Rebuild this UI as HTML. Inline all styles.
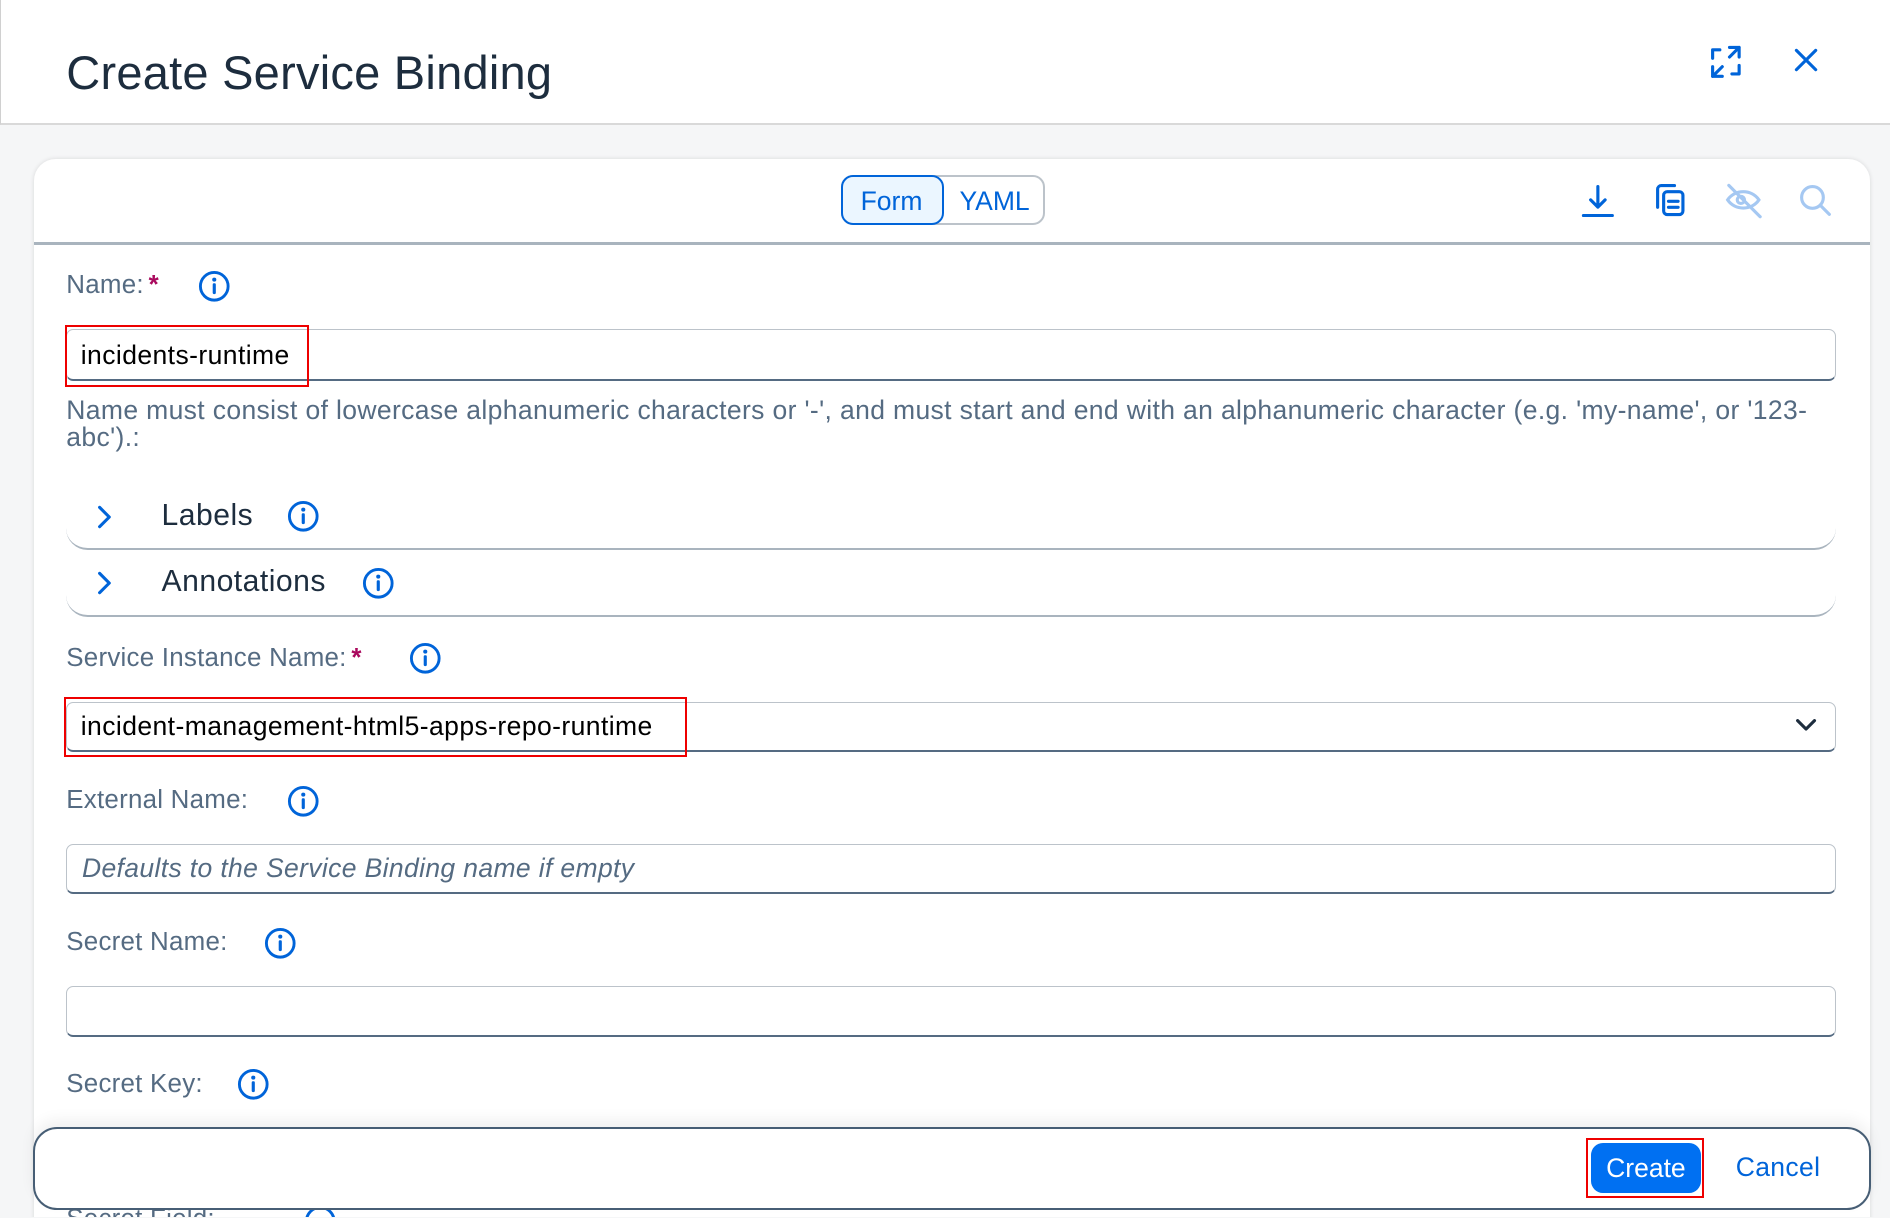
<!DOCTYPE html>
<html><head><meta charset="utf-8">
<style>
html,body{margin:0;padding:0;width:1890px;height:1218px;overflow:hidden;background:#f5f6f7;}
#w{zoom:1.20536;width:1568px;height:1010px;position:relative;overflow:hidden;font-family:"Liberation Sans",sans-serif;background:#f5f6f7;}
.a{position:absolute;}
.hdr{left:0;top:0;width:1568px;height:104px;background:#fff;border-bottom:2px solid #d9d9d9;border-left:1px solid #d0d0d0;box-sizing:border-box;}
.title{left:55px;top:37px;font-size:39px;color:#1d2d3e;letter-spacing:.2px}
.card{left:28px;top:132px;width:1523px;height:900px;background:#fff;border-radius:18px;box-shadow:0 0 4px rgba(0,0,0,.12);}
.tb{left:28px;top:201px;width:1523px;height:2px;background:#a9b4be;}
.lbl{font-size:21.5px;color:#556b82;letter-spacing:.2px}
.ast{color:#aa0a5e;font-weight:bold;margin-left:4px}
.inp{left:55px;width:1468px;height:40px;border:1px solid #bcc3ca;border-bottom:2px solid #556b82;border-radius:6px;box-sizing:border-box;background:#fff;}
.val{font-size:22px;color:#000;letter-spacing:.35px}
.red{border:2px solid #e00;box-sizing:border-box;}
.pan{left:55px;width:1468px;border-bottom:2px solid #a9b4be;border-radius:0 0 18px 18px;}
.pt{font-size:25px;color:#1d2d3e;letter-spacing:.4px}
</style></head><body><div id="w">
<div class="a hdr"></div>
<div class="a title">Create Service Binding</div>
<svg class="a" style="left:1418px;top:37px" width="28" height="28" viewBox="0 0 28 28" fill="none" stroke="#0064d9" stroke-width="2.6" stroke-linecap="round" stroke-linejoin="round"><path d="M3 11V4h6M25 17v7h-6M17 2h8v8M25 2l-8 8M3 18v8h8M3 26l8-8"/></svg>
<svg class="a" style="left:1488px;top:40px" width="20" height="20" viewBox="0 0 20 20" stroke="#0064d9" stroke-width="2.6" stroke-linecap="round"><path d="M2 2l16 16M18 2L2 18"/></svg>
<div class="a card"></div>
<div class="a tb"></div>
<div class="a" style="left:698px;top:145px;width:169px;height:42px;border:2px solid #bcc3ca;border-radius:10px;box-sizing:border-box;"></div>
<div class="a" style="left:698px;top:145px;width:85px;height:42px;border:2px solid #0064d9;border-radius:10px;box-sizing:border-box;background:#ebf6ff;"></div>
<div class="a" style="left:714px;top:154px;font-size:22px;color:#0064d9;">Form</div>
<div class="a" style="left:796px;top:154px;font-size:22px;color:#0064d9;">YAML</div>
<svg class="a" style="left:1312px;top:152px" width="28" height="28" viewBox="0 0 28 28" fill="none" stroke="#0064d9" stroke-width="2.6" stroke-linecap="round" stroke-linejoin="round"><path d="M14 3v17M8 14l6 6 6-6M2 27h24"/></svg>
<svg class="a" style="left:1372px;top:151px" width="28" height="30" viewBox="0 0 28 30" fill="none" stroke="#0064d9" stroke-width="2.6" stroke-linecap="round" stroke-linejoin="round"><path d="M17 3H6a3 3 0 0 0-3 3v15"/><rect x="8" y="8" width="16" height="19" rx="3"/><path d="M12 16h8M12 21h8"/></svg>
<svg class="a" style="left:1430px;top:152px" width="32" height="30" viewBox="0 0 32 30" fill="none" stroke="#a5c8f2" stroke-width="2.6" stroke-linecap="round"><path d="M3 14c6-9 20-9 26 0c-6 9-20 9-26 0z"/><circle cx="14" cy="14" r="3"/><path d="M4 2l26 26"/></svg>
<svg class="a" style="left:1492px;top:152px" width="28" height="28" viewBox="0 0 28 28" fill="none" stroke="#a5c8f2" stroke-width="2.6" stroke-linecap="round"><circle cx="12" cy="12" r="9"/><path d="M19 19l7 7"/></svg>

<div class="a lbl" style="left:55px;top:225px">Name:<span class="ast">*</span></div>
<svg class="a" style="left:164px;top:224px" width="27" height="27" viewBox="0 0 27 27"><circle cx="13.5" cy="13.5" r="11.5" fill="none" stroke="#0064d9" stroke-width="2.4"/><circle cx="13.5" cy="8" r="1.7" fill="#0064d9"/><rect x="12.2" y="11" width="2.6" height="9" rx="1" fill="#0064d9"/></svg>
<div class="a inp" style="top:273px;height:43px"></div>
<div class="a red" style="left:54px;top:270px;width:202px;height:51px"></div>
<div class="a val" style="left:67px;top:282px">incidents-runtime</div>
<div class="a lbl" style="left:55px;top:329px;width:1470px;line-height:23px;font-size:22px;letter-spacing:.3px">Name must consist of lowercase alphanumeric characters or '-', and must start and end with an alphanumeric character (e.g. 'my-name', or '123-abc').:</div>

<div class="a pan" style="top:400px;height:55px"></div>
<svg class="a" style="left:80px;top:419px" width="14" height="20" viewBox="0 0 14 20" fill="none" stroke="#0064d9" stroke-width="2.6" stroke-linecap="round" stroke-linejoin="round"><path d="M3 2l8 8-8 8"/></svg>
<div class="a pt" style="left:134px;top:414px">Labels</div>
<svg class="a" style="left:238px;top:415px" width="27" height="27" viewBox="0 0 27 27"><circle cx="13.5" cy="13.5" r="11.5" fill="none" stroke="#0064d9" stroke-width="2.4"/><circle cx="13.5" cy="8" r="1.7" fill="#0064d9"/><rect x="12.2" y="11" width="2.6" height="9" rx="1" fill="#0064d9"/></svg>
<div class="a pan" style="top:458px;height:52px"></div>
<svg class="a" style="left:80px;top:474px" width="14" height="20" viewBox="0 0 14 20" fill="none" stroke="#0064d9" stroke-width="2.6" stroke-linecap="round" stroke-linejoin="round"><path d="M3 2l8 8-8 8"/></svg>
<div class="a pt" style="left:134px;top:469px">Annotations</div>
<svg class="a" style="left:300px;top:470px" width="27" height="27" viewBox="0 0 27 27"><circle cx="13.5" cy="13.5" r="11.5" fill="none" stroke="#0064d9" stroke-width="2.4"/><circle cx="13.5" cy="8" r="1.7" fill="#0064d9"/><rect x="12.2" y="11" width="2.6" height="9" rx="1" fill="#0064d9"/></svg>

<div class="a lbl" style="left:55px;top:534px">Service Instance Name:<span class="ast">*</span></div>
<svg class="a" style="left:339px;top:533px" width="27" height="27" viewBox="0 0 27 27"><circle cx="13.5" cy="13.5" r="11.5" fill="none" stroke="#0064d9" stroke-width="2.4"/><circle cx="13.5" cy="8" r="1.7" fill="#0064d9"/><rect x="12.2" y="11" width="2.6" height="9" rx="1" fill="#0064d9"/></svg>
<div class="a inp" style="top:582px;height:42px"></div>
<div class="a red" style="left:53px;top:578px;width:517px;height:50px"></div>
<div class="a val" style="left:67px;top:590px">incident-management-html5-apps-repo-runtime</div>
<svg class="a" style="left:1488px;top:595px" width="20" height="14" viewBox="0 0 20 14" fill="none" stroke="#1d2d3e" stroke-width="2.6" stroke-linecap="round" stroke-linejoin="round"><path d="M3 3l7 7 7-7"/></svg>

<div class="a lbl" style="left:55px;top:652px">External Name:</div>
<svg class="a" style="left:238px;top:651px" width="27" height="27" viewBox="0 0 27 27"><circle cx="13.5" cy="13.5" r="11.5" fill="none" stroke="#0064d9" stroke-width="2.4"/><circle cx="13.5" cy="8" r="1.7" fill="#0064d9"/><rect x="12.2" y="11" width="2.6" height="9" rx="1" fill="#0064d9"/></svg>
<div class="a inp" style="top:700px;height:42px"></div>
<div class="a" style="left:68px;top:708px;font-size:22px;color:#556b82;font-style:italic;letter-spacing:.3px">Defaults to the Service Binding name if empty</div>

<div class="a lbl" style="left:55px;top:770px">Secret Name:</div>
<svg class="a" style="left:219px;top:769px" width="27" height="27" viewBox="0 0 27 27"><circle cx="13.5" cy="13.5" r="11.5" fill="none" stroke="#0064d9" stroke-width="2.4"/><circle cx="13.5" cy="8" r="1.7" fill="#0064d9"/><rect x="12.2" y="11" width="2.6" height="9" rx="1" fill="#0064d9"/></svg>
<div class="a inp" style="top:818px;height:42px"></div>

<div class="a lbl" style="left:55px;top:888px">Secret Key:</div>
<svg class="a" style="left:197px;top:886px" width="27" height="27" viewBox="0 0 27 27"><circle cx="13.5" cy="13.5" r="11.5" fill="none" stroke="#0064d9" stroke-width="2.4"/><circle cx="13.5" cy="8" r="1.7" fill="#0064d9"/><rect x="12.2" y="11" width="2.6" height="9" rx="1" fill="#0064d9"/></svg>
<div class="a lbl" style="left:55px;top:1000px">Secret Field:</div>
<svg class="a" style="left:252px;top:1000px" width="27" height="27" viewBox="0 0 27 27"><circle cx="13.5" cy="13.5" r="11.5" fill="none" stroke="#0064d9" stroke-width="2.4"/></svg>

<div class="a" style="left:27px;top:935px;width:1525px;height:69px;background:#fff;border:2px solid #475e75;border-radius:20px;box-sizing:border-box;box-shadow:0 -6px 12px rgba(0,0,0,.06);"></div>
<div class="a red" style="left:1316px;top:944px;width:98px;height:50px"></div>
<div class="a" style="left:1320px;top:948px;width:91px;height:42px;background:#0070f2;border-radius:10px;color:#fff;font-size:22px;text-align:center;line-height:42px">Create</div>
<div class="a" style="left:1440px;top:956px;font-size:22px;color:#0064d9;letter-spacing:.3px">Cancel</div>
</div></body></html>
